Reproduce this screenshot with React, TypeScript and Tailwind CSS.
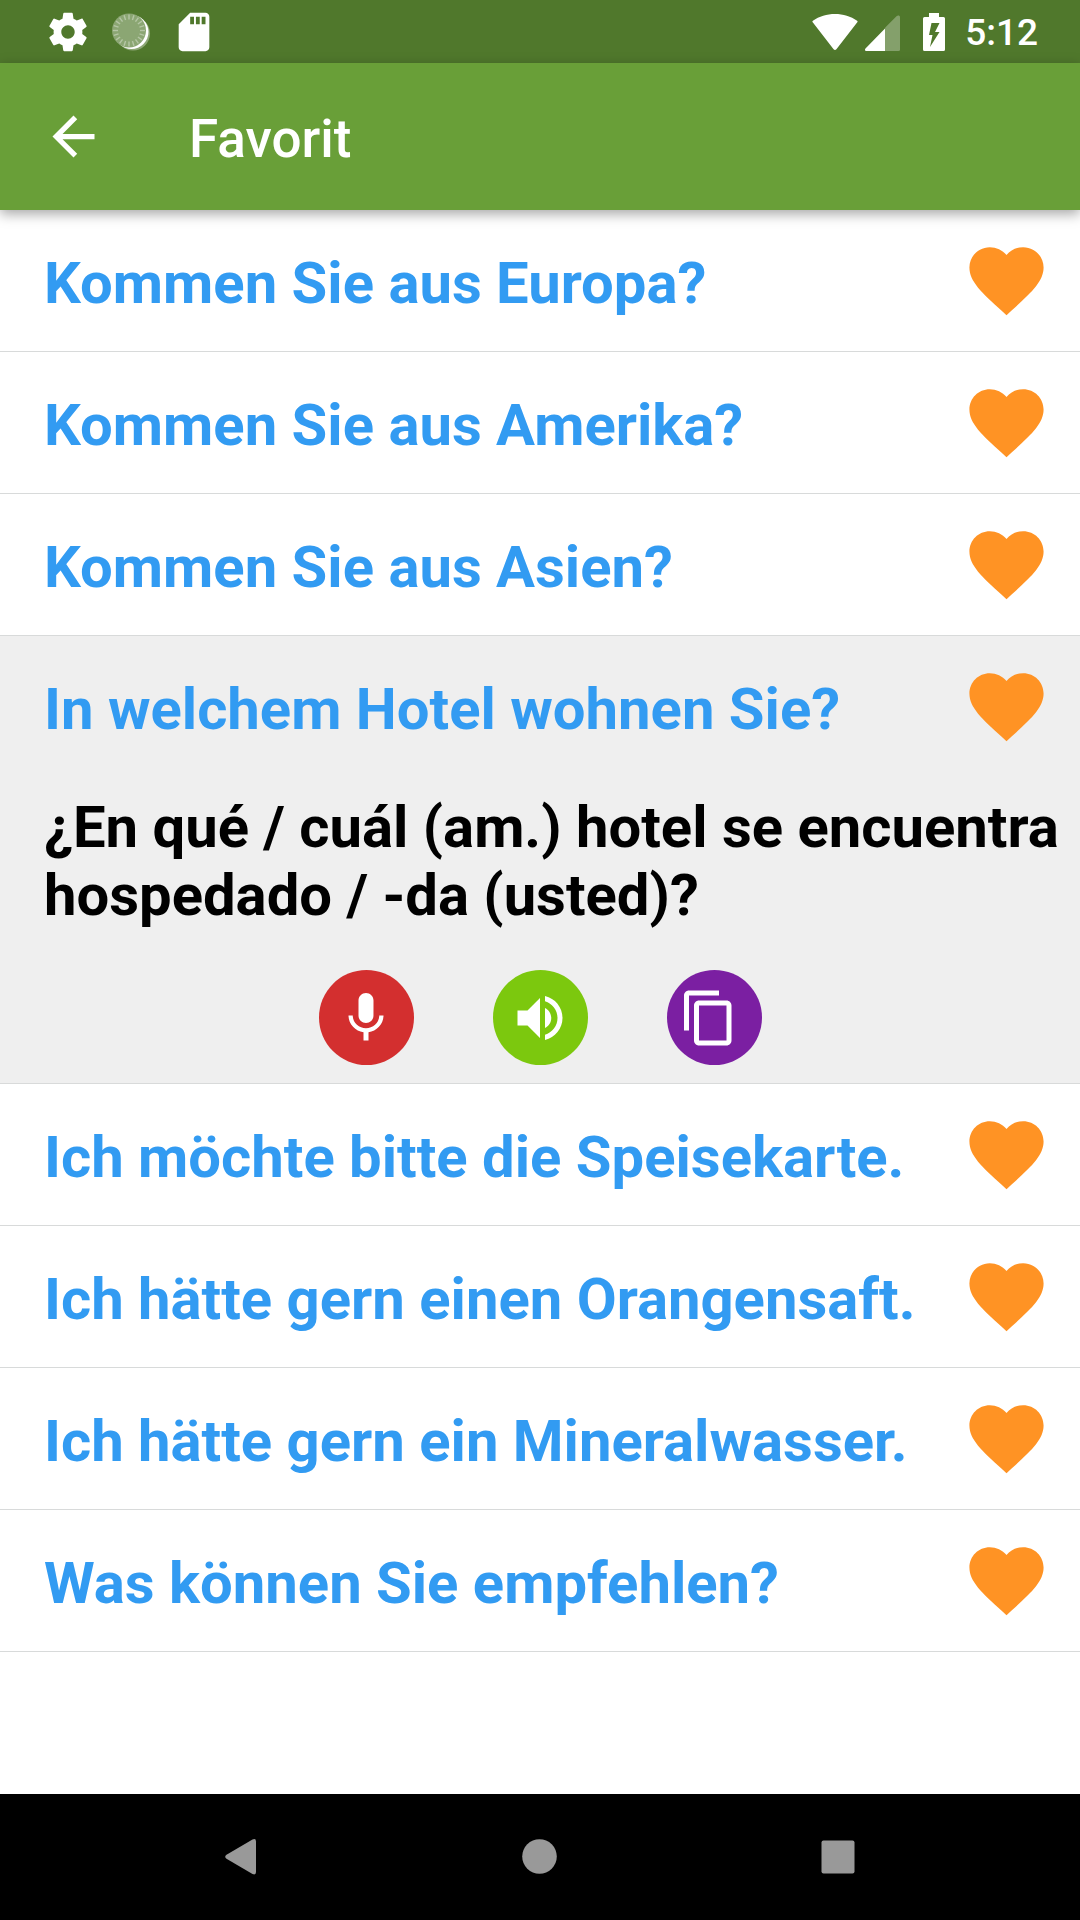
import React from "react";

const phrasesBefore = [
  "Kommen Sie aus Europa?",
  "Kommen Sie aus Amerika?",
  "Kommen Sie aus Asien?",
];

const phrasesAfter = [
  "Ich möchte bitte die Speisekarte.",
  "Ich hätte gern einen Orangensaft.",
  "Ich hätte gern ein Mineralwasser.",
  "Was können Sie empfehlen?",
];

function Icon({ d, className }: { d: string; className: string }) {
  return (
    <svg viewBox="0 0 24 24" fill="currentColor" aria-hidden="true" className={className}>
      <path d={d} />
    </svg>
  );
}

const icons = {
  settings:
    "M19.43 12.98c.04-.32.07-.64.07-.98s-.03-.66-.07-.98l2.11-1.65c.19-.15.24-.42.12-.64l-2-3.46c-.12-.22-.39-.3-.61-.22l-2.49 1c-.52-.4-1.08-.73-1.69-.98l-.38-2.65C14.46 2.18 14.25 2 14 2h-4c-.25 0-.46.18-.49.42l-.38 2.65c-.61.25-1.17.59-1.69.98l-2.49-1c-.23-.09-.49 0-.61.22l-2 3.46c-.13.22-.07.49.12.64l2.11 1.65c-.04.32-.07.65-.07.98s.03.66.07.98l-2.11 1.65c-.19.15-.24.42-.12.64l2 3.46c.12.22.39.3.61.22l2.49-1c.52.4 1.08.73 1.69.98l.38 2.65c.03.24.24.42.49.42h4c.25 0 .46-.18.49-.42l.38-2.65c.61-.25 1.17-.59 1.69-.98l2.49 1c.23.09.49 0 .61-.22l2-3.46c.12-.22.07-.49-.12-.64l-2.11-1.65zM12 15.5c-1.93 0-3.5-1.57-3.5-3.5s1.57-3.5 3.5-3.5 3.5 1.57 3.5 3.5-1.57 3.5-3.5 3.5z",
  sdCard:
    "M18 2h-8L4.02 8 4 20c0 1.1.9 2 2 2h12c1.1 0 2-.9 2-2V4c0-1.1-.9-2-2-2zm-6 6h-2V4h2v4zm3 0h-2V4h2v4zm3 0h-2V4h2v4z",
  back: "M20 11H7.83l5.59-5.59L12 4l-8 8 8 8 1.41-1.41L7.83 13H20v-2z",
  heart:
    "M12 21.35l-1.45-1.32C5.4 15.36 2 12.28 2 8.5 2 5.42 4.42 3 7.5 3c1.74 0 3.41.81 4.5 2.09C13.09 3.81 14.76 3 16.5 3 19.58 3 22 5.42 22 8.5c0 3.78-3.4 6.86-8.55 11.54L12 21.35z",
  mic: "M12 14c1.66 0 2.99-1.34 2.99-3L15 5c0-1.66-1.34-3-3-3S9 3.34 9 5v6c0 1.66 1.34 3 3 3zm5.3-3c0 3-2.54 5.1-5.3 5.1S6.7 14 6.7 11H5c0 3.41 2.72 6.23 6 6.72V21h2v-3.28c3.28-.48 6-3.3 6-6.72h-1.7z",
  volume:
    "M3 9v6h4l5 5V4L7 9H3zm13.5 3c0-1.77-1.02-3.29-2.5-4.03v8.05c1.48-.73 2.5-2.25 2.5-4.02zM14 3.23v2.06c2.89.86 5 3.54 5 6.71s-2.11 5.85-5 6.71v2.06c4.01-.91 7-4.49 7-8.77s-2.99-7.86-7-8.77z",
  copy: "M16 1H4c-1.1 0-2 .9-2 2v14h2V3h12V1zm3 4H8c-1.1 0-2 .9-2 2v14c0 1.1.9 2 2 2h11c1.1 0 2-.9 2-2V7c0-1.1-.9-2-2-2zm0 16H8V7h11v14z",
};

const tickAngles = Array.from({ length: 20 }, (_, i) => i * 18);

function SyncIcon() {
  return (
    <svg viewBox="0 0 46 46" aria-hidden="true" className="size-[46px]">
      <circle cx="25" cy="24.5" r="17" fill="#fff" fillOpacity="0.35" />
      <circle cx="23.5" cy="23" r="17" fill="#fff" />
      <circle cx="21" cy="21.5" r="17" fill="#8ba673" />
      <g stroke="#b5c6a5" strokeWidth="1.4">
        {tickAngles.map((a) => (
          <line key={a} x1="21" y1="5.5" x2="21" y2="10.5" transform={`rotate(${a} 21 21.5)`} />
        ))}
      </g>
    </svg>
  );
}

function StatusBar() {
  return (
    <div className="flex h-[63px] items-center justify-between bg-[#50782c] pr-[42px] pl-[45px] text-white">
      <div className="flex items-center gap-[17px]">
        <Icon d={icons.settings} className="size-[46px]" />
        <SyncIcon />
        <Icon d={icons.sdCard} className="size-[46px]" />
      </div>
      <div className="flex items-center">
        <svg viewBox="0 0 46 38" fill="currentColor" aria-hidden="true" className="mr-[7px] h-[38px] w-[46px]">
          <path d="M.9 9.6C.2 9 .2 8.3.9 7.8 7.2 3.2 14.8 1 23 1s15.800 2.200 22.100 6.800c.7.5.7 1.200 0 1.800L24.400 36.200c-.8 1-2 1-2.800 0z" />
        </svg>
        <svg viewBox="0 0 35 38" fill="currentColor" aria-hidden="true" className="mr-[23px] h-[38px] w-[35px]">
          <path d="M31.500 3.300C33 2 35 2.500 35 4.500V36.500Q35 38 33.500 38H20V14.800z" opacity="0.3" />
          <path d="M20 15.500V38H1.500C0 38-.5 36.500.5 35.500z" />
        </svg>
        <svg viewBox="0 0 22 38" fill="currentColor" aria-hidden="true" className="mr-5 h-[38px] w-[22px]">
          <path
            fillRule="evenodd"
            d="M6 0h10v4h4.500Q22 4 22 5.500v31Q22 38 20.500 38h-19Q0 38 0 36.500v-31Q0 4 1.500 4H6zM8.500 10 6 22h3.500L7 34l9.500-15H12l4.500-9z"
          />
        </svg>
        <span className="pt-[3px] text-[37px] leading-[44px] font-medium">5:12</span>
      </div>
    </div>
  );
}

function Phrase({ text }: { text: string }) {
  return (
    <div className="flex items-center justify-between pr-[29px] pl-[44px]">
      <button type="button" className="flex-1 pt-[39px] pb-[34px] text-left text-[58px] leading-[68px] font-bold text-[#329bf2]">
        {text}
      </button>
      <button type="button" aria-label={`Favorit: ${text}`} className="shrink-0 text-[#ff9324]">
        <Icon d={icons.heart} className="size-[89px]" />
      </button>
    </div>
  );
}

export default function App() {
  return (
    <div className="flex min-h-screen flex-col bg-white font-[Roboto,sans-serif]">
      <StatusBar />
      <header className="relative flex h-[147px] items-center bg-[#699f38] pl-[42px] text-white shadow-[0_4px_12px_rgba(0,0,0,0.35)]">
        <button type="button" aria-label="Zurück" className="mr-[84px]">
          <Icon d={icons.back} className="size-[63px]" />
        </button>
        <h1 className="pt-1 text-[53px] leading-[62px] font-medium">Favorit</h1>
      </header>
      <main className="flex-1">
        <ul>
          {phrasesBefore.map((p) => (
            <li key={p} className="border-b border-[#d8dada]">
              <Phrase text={p} />
            </li>
          ))}
          <li className="border-b border-[#d8dada] bg-[#efefef]">
            <Phrase text="In welchem Hotel wohnen Sie?" />
            <p className="pt-4 pr-5 pl-[44px] text-[58px] leading-[68px] font-bold text-black">
              ¿En qué / cuál (am.) hotel se encuentra hospedado / -da (usted)?
            </p>
            <div className="flex justify-center gap-[79px] pt-[41px] pb-[18px] text-white">
              <button type="button" aria-label="Aufnehmen" className="flex size-[95px] items-center justify-center rounded-full bg-[#d32f2f]">
                <Icon d={icons.mic} className="size-[60px]" />
              </button>
              <button type="button" aria-label="Anhören" className="flex size-[95px] items-center justify-center rounded-full bg-[#7cc80e]">
                <Icon d={icons.volume} className="size-[60px]" />
              </button>
              <button type="button" aria-label="Kopieren" className="flex size-[95px] items-center justify-center rounded-full bg-[#7b1fa2] pr-2.5">
                <Icon d={icons.copy} className="size-[60px]" />
              </button>
            </div>
          </li>
          {phrasesAfter.map((p) => (
            <li key={p} className="border-b border-[#d8dada]">
              <Phrase text={p} />
            </li>
          ))}
        </ul>
      </main>
      <nav className="flex h-[126px] items-center justify-center gap-[238px] bg-black text-[#999]">
        <button type="button" aria-label="Zurück">
          <svg viewBox="0 0 60 60" fill="currentColor" aria-hidden="true" className="size-[60px]">
            <path d="M14.500 31.800q-2.600-2 0-4L40.500 12.500q3.500-1.500 3.500 2v30.500q0 3.500-3.500 2z" />
          </svg>
        </button>
        <button type="button" aria-label="Startseite">
          <svg viewBox="0 0 60 60" fill="currentColor" aria-hidden="true" className="size-[60px]">
            <circle cx="29.500" cy="29.500" r="17.300" />
          </svg>
        </button>
        <button type="button" aria-label="Übersicht">
          <svg viewBox="0 0 60 60" fill="currentColor" aria-hidden="true" className="size-[60px]">
            <rect x="13.500" y="13.500" width="33" height="33" rx="2" />
          </svg>
        </button>
      </nav>
    </div>
  );
}
